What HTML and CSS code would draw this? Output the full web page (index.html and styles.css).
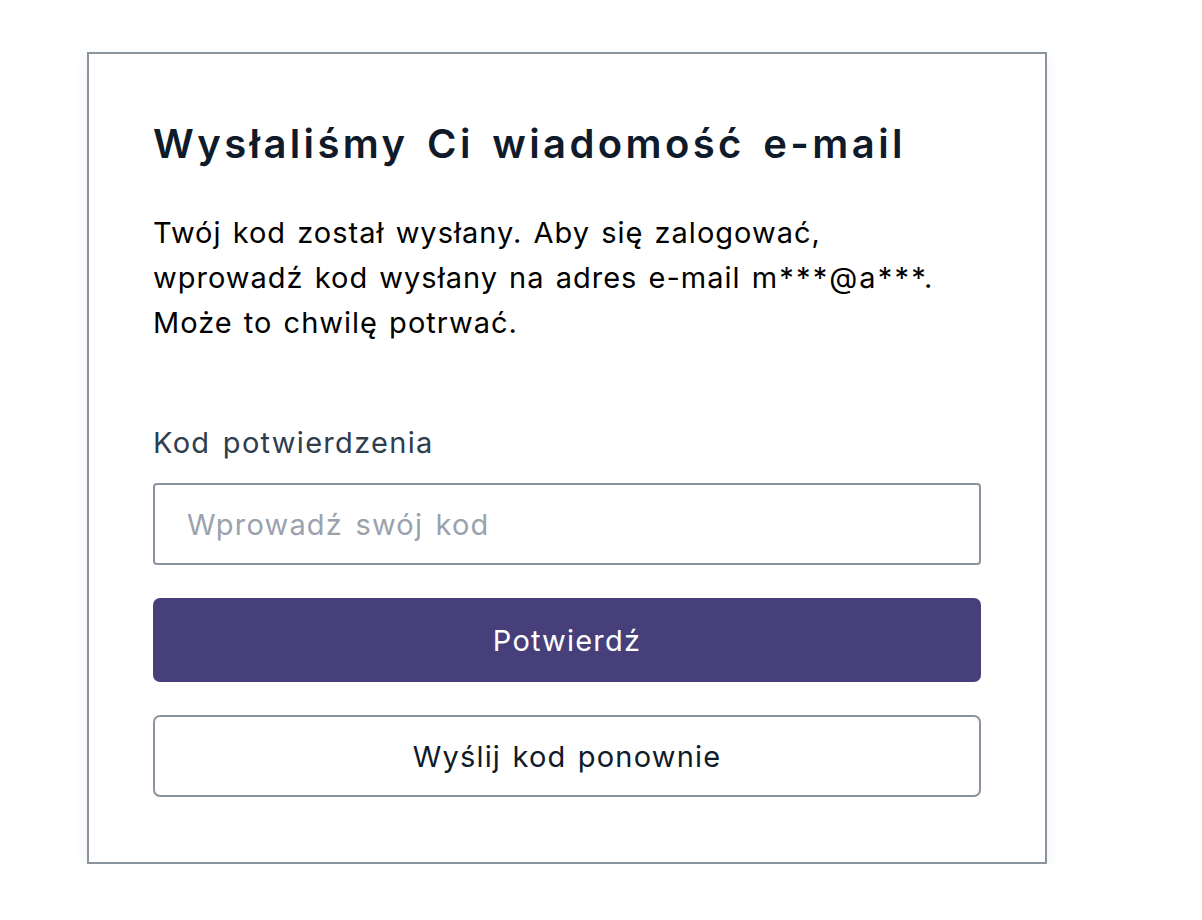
FILE: index.html
```html
<!DOCTYPE html>
<html lang="pl">
<head>
<meta charset="utf-8">
<title>Kod potwierdzenia</title>
<link rel="stylesheet" href="styles.css">
</head>
<body>

<div class="card">
    <h1 class="title">Wysłaliśmy Ci wiadomość e-mail</h1>

    <p class="message">
        Twój kod został wysłany. Aby się zalogować,<br>
        wprowadź kod wysłany na adres e-mail <span class="masked">m***@a***.</span><br>
        Może to chwilę potrwać.
    </p>

    <!-- Code form -->
    <form class="code-form" onsubmit="return false">
        <label for="code" class="field-label">Kod potwierdzenia</label>
        <input type="text" id="code" name="code" class="code-input" placeholder="Wprowadź swój kod">

        <button type="submit" class="btn btn-primary">Potwierdź</button>
        <button type="button" class="btn btn-secondary">Wyślij kod ponownie</button>
    </form>
</div>

</body>
</html>
```

FILE: styles.css
```css
:root {
  --text-dark: #0f1a2a;
  --text-label: #2f3d4c;
  --border-gray: #8a949f;
  --placeholder: #9aa2ae;
  --primary: #463f7a;
  --radius: 7px;
}

body {
    margin: 0;
    padding: 52px 0 0 87px;
    font-family: Inter, "Noto Sans", sans-serif;
    background: #fff;
}

.card {
    width: 960px;
    box-sizing: border-box;
    padding: 66px 64px 65px;
    border: 2px solid var(--border-gray);
    background: #fff;
    box-shadow: 0 4px 14px rgba(0, 0, 0, 0.06);
}

.title {
    margin: 0;
    font-size: 40px;
    line-height: 48px;
    font-weight: 560;
    letter-spacing: 3.4px;
    word-spacing: 5px;
    color: var(--text-dark);
}

.message {
    margin: 42px 0 0;
    font-size: 29px;
    line-height: 45px;
    letter-spacing: 1px;
    word-spacing: 2px;
    color: #000;
}

.masked {
    letter-spacing: 2.2px;
}

.code-form {
    display: flex;
    flex-direction: column;
    margin-top: 80px;
}

.field-label {
    font-size: 29px;
    line-height: 36px;
    letter-spacing: 1.3px;
    word-spacing: 3px;
    color: var(--text-label);
    margin-bottom: 22px;
}

.code-input {
    height: 82px;
    box-sizing: border-box;
    padding: 0 32px;
    font-family: inherit;
    font-size: 29px;
    letter-spacing: 1.2px;
    word-spacing: 3px;
    color: var(--text-dark);
    border: 2px solid var(--border-gray);
    border-radius: 4px;
    outline: none;
}

.code-input::placeholder {
    color: var(--placeholder);
}

.btn {
    font-family: inherit;
    font-size: 29px;
    letter-spacing: 1.2px;
    word-spacing: 2px;
    border-radius: var(--radius);
    cursor: pointer;
}

.btn-primary {
    height: 84px;
    margin-top: 33px;
    background: var(--primary);
    color: #fff;
    border: none;
}

.btn-secondary {
    height: 82px;
    margin-top: 33px;
    background: #fff;
    color: var(--text-dark);
    border: 2px solid var(--border-gray);
}
```
